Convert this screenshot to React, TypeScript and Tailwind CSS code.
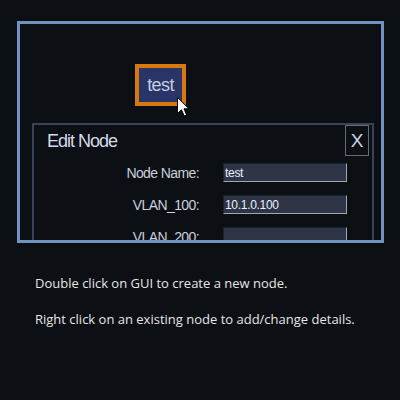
import React from 'react';

const fields = [
  { label: 'Node Name:', value: 'test' },
  { label: 'VLAN_100:', value: '10.1.0.100' },
  { label: 'VLAN_200:', value: '' },
];

const Cursor: React.FC = () => (
  <svg width="13" height="21" viewBox="0 0 13 21" className="absolute left-[157px] top-[73px]">
    <path
      d="M0.5 0.5 L0.5 16.5 L4.5 12.8 L7.2 19 L9.6 18 L7 11.8 L12 11.8 Z"
      fill="#ffffff"
      stroke="#000000"
      strokeWidth="1"
      strokeLinejoin="miter"
    />
  </svg>
);

const App: React.FC = () => {
  return (
    <main className="w-[400px] h-[400px] overflow-hidden bg-[#0c0f14] pt-[21px] pl-[17px]">
      {/* canvas */}
      <div className="relative w-[367px] h-[222px] border-[3px] border-[#7393bf] overflow-hidden">
        {/* node */}
        <div className="absolute left-[115px] top-[40px] w-[51px] h-[42px] border-4 border-[#d8790d] bg-[#283566] flex items-center justify-center">
          <span className="font-['Liberation_Sans',Arial,sans-serif] text-[18px] tracking-[-0.6px] text-[#c7cfe2] leading-none">
            test
          </span>
        </div>
        <Cursor />

        {/* edit dialog */}
        <div className="absolute left-[12px] top-[99px] w-[342px] h-[140px] border-2 border-[#3a4253] bg-[#0c0f14] font-['Liberation_Sans',Arial,sans-serif]">
          <button className="absolute right-[3px] top-0 w-[24px] h-[31px] border border-[#686c76] flex items-center justify-center text-[19px] text-[#cdd6e6] leading-none">
            X
          </button>
          <h2 className="pl-[13px] pt-[6px] text-[18px] leading-[20px] tracking-[-1px] text-[#d3dae8]">
            Edit Node
          </h2>
          <div className="mt-[12px] flex flex-col gap-[13px]">
            {fields.map((f) => (
              <div key={f.label} className="flex items-center gap-[24px]">
                <label className="w-[165px] text-right text-[14px] tracking-[-0.6px] text-[#c9d0de] leading-none">
                  {f.label}
                </label>
                <div className="w-[124px] h-[19px] bg-[#2e3547] border-t border-l border-t-[#1c2130] border-l-[#1c2130] border-b border-r border-b-[#a2a6b0] border-r-[#a2a6b0] flex items-center pl-[1px] text-[12px] tracking-[-0.3px] text-[#eef1f7]">
                  {f.value}
                </div>
              </div>
            ))}
          </div>
        </div>
      </div>

      <div className="pl-[18px] font-['Open_Sans',sans-serif] text-[13px] text-[#e6e6e6]">
        <p className="mt-[31px] leading-[18px]">Double click on GUI to create a new node.</p>
        <p className="mt-[18px] leading-[18px]">Right click on an existing node to add/change details.</p>
      </div>
    </main>
  );
};

export default App;
